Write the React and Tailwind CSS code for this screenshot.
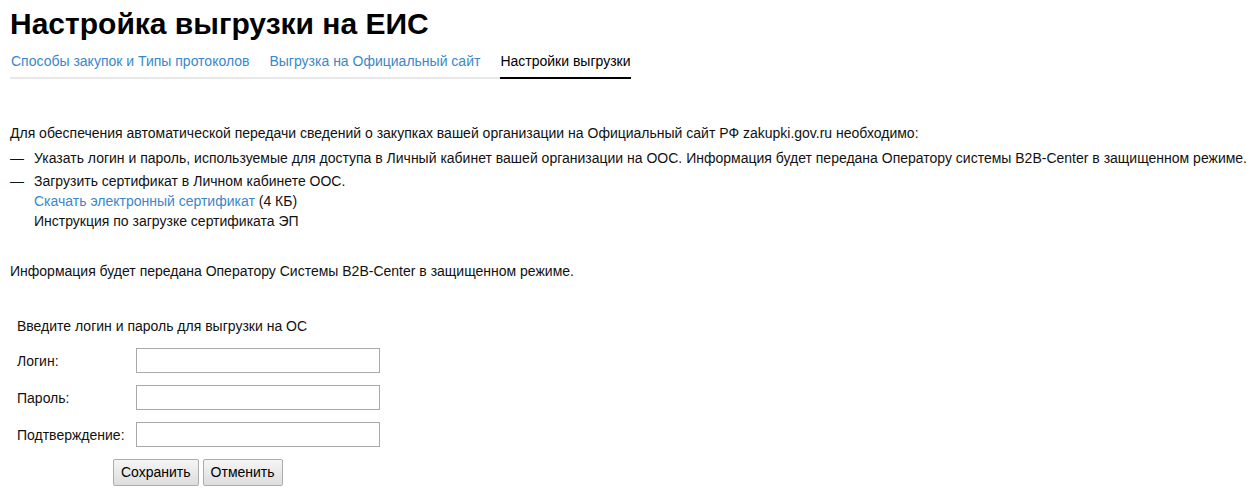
import { useState } from "react";

const font = "font-['Liberation_Sans',Arial,sans-serif]";

function Tab({ children, active }) {
  return (
    <a
      href="#"
      className={`-mb-[2px] border-b-2 pb-[6px] leading-5 ${
        active ? "border-black text-black" : "border-transparent text-[#3a87c9]"
      }`}
    >
      {children}
    </a>
  );
}

function Field({ label, type = "text" }) {
  const [value, setValue] = useState("");
  return (
    <div className="flex h-[25px] items-center">
      <label className="w-[119px] shrink-0 leading-5">{label}</label>
      <input
        type={type}
        value={value}
        onChange={(e) => setValue(e.target.value)}
        className="h-[25px] w-[244px] border border-[#a9a9a9] bg-white px-1 outline-none"
      />
    </div>
  );
}

export default function App() {
  return (
    <div className={`${font} min-h-[501px] bg-white px-[10px] text-[14px] text-[#111]`}>
      <h1 className="pt-[6px] text-[30px] font-bold leading-[36px] text-black">
        Настройка выгрузки на ЕИС
      </h1>

      <nav className="mt-[9px] inline-flex gap-5 border-b-2 border-[#e8e8e8] pl-px">
        <Tab>Способы закупок и Типы протоколов</Tab>
        <Tab>Выгрузка на Официальный сайт</Tab>
        <Tab active>Настройки выгрузки</Tab>
      </nav>

      <div className="mt-[44px] leading-5">
        <p>
          Для обеспечения автоматической передачи сведений о закупках вашей организации на
          Официальный сайт РФ zakupki.gov.ru необходимо:
        </p>
        <div className="mt-[5px] flex">
          <span className="w-6 shrink-0">—</span>
          <span>
            Указать логин и пароль, используемые для доступа в Личный кабинет вашей
            организации на ООС. Информация будет передана Оператору системы B2B-Center в
            защищенном режиме.
          </span>
        </div>
        <div className="mt-[3px] flex">
          <span className="w-6 shrink-0">—</span>
          <div>
            <div>Загрузить сертификат в Личном кабинете ООС.</div>
            <div>
              <a href="#" className="text-[#3a87c9]">
                Скачать электронный сертификат
              </a>{" "}
              (4 КБ)
            </div>
            <div>Инструкция по загрузке сертификата ЭП</div>
          </div>
        </div>
        <p className="mt-[30px]">
          Информация будет передана Оператору Системы B2B-Center в защищенном режиме.
        </p>
      </div>

      <form className="mt-[35px] flex flex-col pl-[7px]" onSubmit={(e) => e.preventDefault()}>
        <div className="leading-5">Введите логин и пароль для выгрузки на ОС</div>
        <div className="mt-[12px] flex flex-col gap-3">
          <Field label="Логин:" />
          <Field label="Пароль:" type="password" />
          <Field label="Подтверждение:" />
        </div>
        <div className="mt-3 flex gap-[4px] pl-[96px]">
          <button
            type="submit"
            className="h-[27px] rounded-[2px] border border-[#acacac] bg-gradient-to-b from-[#f5f5f5] to-[#dddddd] px-[7px] text-black"
          >
            Сохранить
          </button>
          <button
            type="button"
            className="h-[27px] rounded-[2px] border border-[#acacac] bg-gradient-to-b from-[#f5f5f5] to-[#dddddd] px-[7px] text-black"
          >
            Отменить
          </button>
        </div>
      </form>
    </div>
  );
}
